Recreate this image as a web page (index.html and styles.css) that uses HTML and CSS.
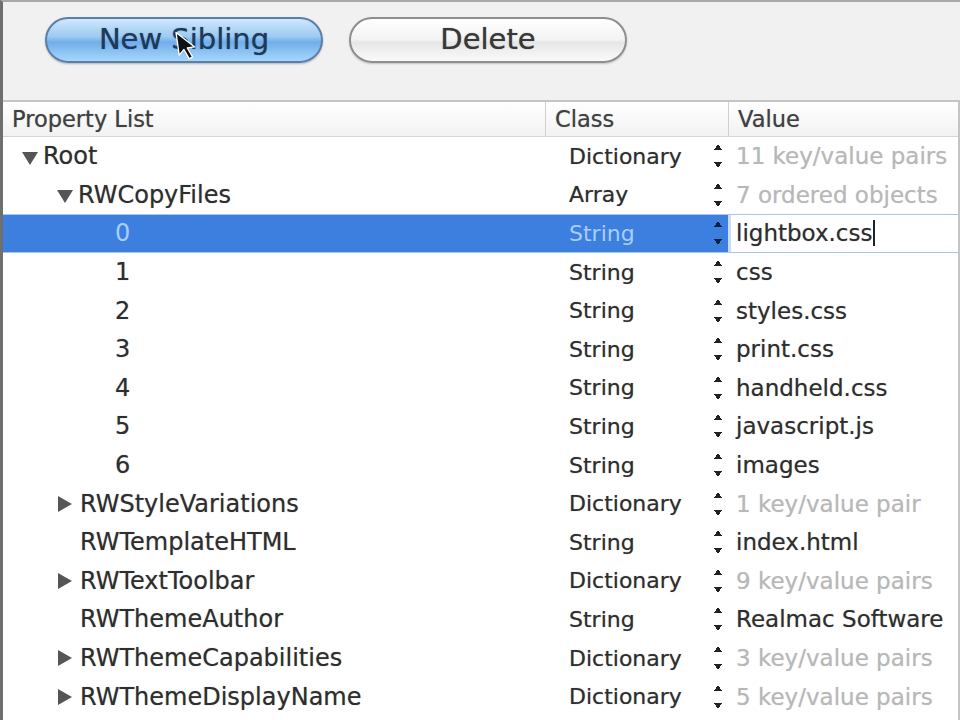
FILE: index.html
```html
<!DOCTYPE html>
<html>
<head>
<meta charset="utf-8">
<link rel="stylesheet" href="styles.css">
</head>
<body>
<div class="window">
  <div class="toolbar">
    <button class="btn btn-aqua">New Sibling</button>
    <button class="btn btn-plain">Delete</button>
    <svg class="cursor" width="22" height="32" viewBox="0 0 22 32"><path d="M2 1 L2 24 L7.5 19 L11.5 29 L15 27.5 L11 18 L18.5 18 Z" fill="#111" stroke="#fff" stroke-width="1.3" stroke-linejoin="round"/></svg>
  </div>
  <div class="table">
    <div class="head">
      <div class="c1">Property List</div>
      <div class="c2">Class</div>
      <div class="c3">Value</div>
    </div>
    <div class="row">
      <div class="c1 l0"><span class="tri down"></span>Root</div>
      <div class="c2"><span class="cls">Dictionary</span><span class="step"></span></div>
      <div class="c3 dim">11 key/value pairs</div>
    </div>
    <div class="row">
      <div class="c1 l1"><span class="tri down"></span>RWCopyFiles</div>
      <div class="c2"><span class="cls">Array</span><span class="step"></span></div>
      <div class="c3 dim">7 ordered objects</div>
    </div>
    <div class="row sel">
      <div class="c1 l2">0</div>
      <div class="c2"><span class="cls">String</span><span class="step"></span></div>
      <div class="c3"><div class="editor">lightbox.css<span class="caret"></span></div></div>
    </div>
    <div class="row">
      <div class="c1 l2">1</div>
      <div class="c2"><span class="cls">String</span><span class="step"></span></div>
      <div class="c3">css</div>
    </div>
    <div class="row">
      <div class="c1 l2">2</div>
      <div class="c2"><span class="cls">String</span><span class="step"></span></div>
      <div class="c3">styles.css</div>
    </div>
    <div class="row">
      <div class="c1 l2">3</div>
      <div class="c2"><span class="cls">String</span><span class="step"></span></div>
      <div class="c3">print.css</div>
    </div>
    <div class="row">
      <div class="c1 l2">4</div>
      <div class="c2"><span class="cls">String</span><span class="step"></span></div>
      <div class="c3">handheld.css</div>
    </div>
    <div class="row">
      <div class="c1 l2">5</div>
      <div class="c2"><span class="cls">String</span><span class="step"></span></div>
      <div class="c3">javascript.js</div>
    </div>
    <div class="row">
      <div class="c1 l2">6</div>
      <div class="c2"><span class="cls">String</span><span class="step"></span></div>
      <div class="c3">images</div>
    </div>
    <div class="row">
      <div class="c1 l1"><span class="tri right"></span>RWStyleVariations</div>
      <div class="c2"><span class="cls">Dictionary</span><span class="step"></span></div>
      <div class="c3 dim">1 key/value pair</div>
    </div>
    <div class="row">
      <div class="c1 l1"><span class="tri none"></span>RWTemplateHTML</div>
      <div class="c2"><span class="cls">String</span><span class="step"></span></div>
      <div class="c3">index.html</div>
    </div>
    <div class="row">
      <div class="c1 l1"><span class="tri right"></span>RWTextToolbar</div>
      <div class="c2"><span class="cls">Dictionary</span><span class="step"></span></div>
      <div class="c3 dim">9 key/value pairs</div>
    </div>
    <div class="row">
      <div class="c1 l1"><span class="tri none"></span>RWThemeAuthor</div>
      <div class="c2"><span class="cls">String</span><span class="step"></span></div>
      <div class="c3">Realmac Software</div>
    </div>
    <div class="row">
      <div class="c1 l1"><span class="tri right"></span>RWThemeCapabilities</div>
      <div class="c2"><span class="cls">Dictionary</span><span class="step"></span></div>
      <div class="c3 dim">3 key/value pairs</div>
    </div>
    <div class="row">
      <div class="c1 l1"><span class="tri right"></span>RWThemeDisplayName</div>
      <div class="c2"><span class="cls">Dictionary</span><span class="step"></span></div>
      <div class="c3 dim">5 key/value pairs</div>
    </div>
  </div>
</div>
</body>
</html>
```
FILE: styles.css
```css
html, body {
  margin: 0;
  padding: 0;
  width: 960px;
  height: 720px;
  overflow: hidden;
  background: #f1f1f1;
}
.window {
  width: 957px;
  height: 718px;
  border-left: 3px solid #6f6f6f;
  border-top: 2px solid #a8a8a8;
  font-family: "DejaVu Sans", sans-serif;
  color: #2e2e2e;
  background: #fff;
  overflow: hidden;
  text-shadow: 0 0 1px rgba(40,40,40,0.45);
}
.toolbar {
  height: 98px;
  box-sizing: border-box;
  padding: 15px 0 0 42px;
  display: flex;
  gap: 26px;
  align-items: flex-start;
  background: #f1f1f1;
  position: relative;
}
.btn {
  width: 278px;
  height: 46px;
  border-radius: 23px;
  font-family: "DejaVu Sans", sans-serif;
  font-size: 29px;
  padding: 0 0 2px 0;
  text-shadow: 0 0 1px rgba(30,30,30,0.6);
}
.btn-aqua {
  color: #1c3a5e;
  border: 2px solid #5a7fa8;
  background: linear-gradient(to bottom, #cfe7fc 0%, #9ccaf2 42%, #70aeea 55%, #a6d7fb 100%);
  box-shadow: 0 1px 2px rgba(0,0,0,0.25);
}
.btn-plain {
  color: #383838;
  border: 2px solid #8e8e8e;
  background: linear-gradient(to bottom, #ffffff 0%, #f3f3f3 50%, #e6e6e6 55%, #fafafa 100%);
  box-shadow: 0 1px 2px rgba(0,0,0,0.2);
}
.cursor {
  position: absolute;
  left: 173px;
  top: 28px;
  transform: rotate(-8deg);
}
.table {
  font-size: 23px;
  height: 100%;
  border-right: 2px solid #c4c4c4;
}
.head {
  display: flex;
  height: 37px;
  box-sizing: border-box;
  border-top: 2px solid #c4c4c4;
  border-bottom: 1px solid #d6d6d6;
  background: linear-gradient(to bottom, #ffffff, #f2f2f2);
  font-size: 22.5px;
  color: #404040;
  align-items: center;
}
.head .c1 { padding-left: 9px; }
.head .c2 { border-left: 1px solid #d0d0d0; padding-left: 9px; height: 100%; display: flex; align-items: center; }
.head .c3 { border-left: 1px solid #d0d0d0; padding-left: 9px; height: 100%; display: flex; align-items: center; }
.c1 { width: 542px; box-sizing: border-box; flex: none; }
.c2 { width: 183px; box-sizing: border-box; flex: none; }
.c3 { flex: 1; box-sizing: border-box; min-width: 0; white-space: nowrap; overflow: hidden; }
.row {
  display: flex;
  height: 38.6px;
  align-items: center;
}
.row .c1 { display: flex; align-items: center; font-size: 24px; }
.row .c2 { display: flex; align-items: center; padding-left: 24px; justify-content: space-between; padding-right: 6px; font-size: 22px; }
.row .c3 { padding-left: 8px; }
.l0 { padding-left: 19px; }
.l1 { padding-left: 54px; }
.l2 { padding-left: 112px; }
.tri {
  display: inline-block;
  width: 0;
  height: 0;
  margin-right: 5px;
}
.tri.down {
  border-left: 8px solid transparent;
  border-right: 8px solid transparent;
  border-top: 13px solid #555;
  margin-top: 4px;
}
.tri.right {
  border-top: 8px solid transparent;
  border-bottom: 8px solid transparent;
  border-left: 14px solid #555;
  margin-left: 1px;
  margin-right: 8px;
}
.tri.none { width: 16px; margin-right: 7px; }
.step {
  width: 8px;
  height: 24px;
  background:
    linear-gradient(to bottom right, transparent 49%, #222 51%) left top / 4px 6px no-repeat,
    linear-gradient(to bottom left, transparent 49%, #222 51%) right top / 4px 6px no-repeat,
    linear-gradient(to top right, transparent 49%, #222 51%) left bottom / 4px 6px no-repeat,
    linear-gradient(to top left, transparent 49%, #222 51%) right bottom / 4px 6px no-repeat;
}
.dim { color: #b8b8b8; text-shadow: 0 0 1px rgba(150,150,150,0.4); }
.sel .c1, .sel .c2 {
  background: #3c7fde;
  height: 100%;
  color: #a9cdff;
  text-shadow: none;
}
.sel { border-top: 1px solid #a9c6ef; border-bottom: 1px solid #a9c6ef; box-sizing: border-box; }
.sel .step {
  background:
    linear-gradient(to bottom right, transparent 49%, #0d1f3c 51%) left top / 4px 6px no-repeat,
    linear-gradient(to bottom left, transparent 49%, #0d1f3c 51%) right top / 4px 6px no-repeat,
    linear-gradient(to top right, transparent 49%, #0d1f3c 51%) left bottom / 4px 6px no-repeat,
    linear-gradient(to top left, transparent 49%, #0d1f3c 51%) right bottom / 4px 6px no-repeat;
}
.sel .c3 { padding-left: 0; height: 100%; }
.editor {
  height: 100%;
  box-sizing: border-box;
  border-left: 3px solid #c9dcf4;
  background: #fff;
  padding-left: 5px;
  display: flex;
  align-items: center;
  color: #2e2e2e;
}
.caret {
  display: inline-block;
  width: 2px;
  height: 26px;
  background: #222;
  margin-left: 1px;
}
```
